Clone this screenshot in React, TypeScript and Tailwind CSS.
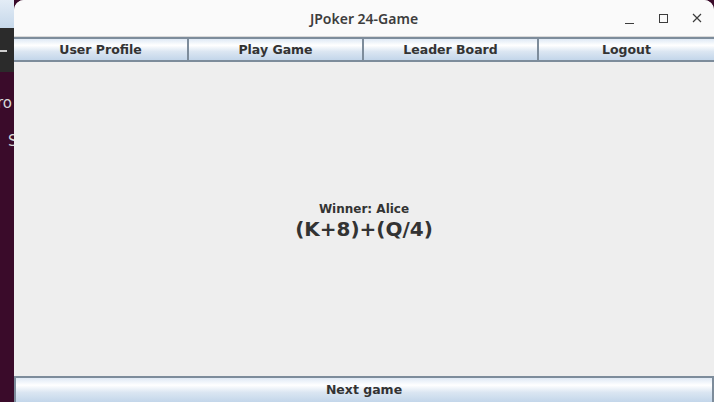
import React from 'react';

const font = { fontFamily: '"DejaVu Sans", "Noto Sans", sans-serif' };

function MetalButton({ label, className = '' }: { label: string; className?: string }) {
  return (
    <div
      className={`flex items-center justify-center pt-[1px] bg-[linear-gradient(to_bottom,#dfe9f5_0%,#ffffff_30%,#dbe6f2_60%,#c3d6ea_100%)] text-[12.5px] font-bold text-[#333333] ${className}`}
    >
      {label}
    </div>
  );
}

export default function App() {
  return (
    <div className="flex h-[402px] w-[714px] overflow-hidden bg-[#3a0b2a]" style={font}>
      {/* desktop strip behind the window */}
      <div className="flex w-[14px] shrink-0 flex-col">
        <div className="h-[28px] bg-[linear-gradient(to_bottom,#e3ecf6,#c6d8ea)]" />
        <div className="relative h-[44px] bg-[#2b2b2b]">
          <div className="absolute left-0 top-[22px] h-[2px] w-[7px] bg-[#cfcfcf]" />
        </div>
        <div className="relative flex-1 overflow-hidden text-[15px] text-[#d9d9d9]">
          <span className="absolute left-[-3px] top-[20px]">ro</span>
          <span className="absolute left-[8px] top-[58px]">S</span>
        </div>
      </div>

      {/* window */}
      <div className="flex flex-1 flex-col overflow-hidden rounded-t-[10px] bg-[#eeeeee]">
        {/* title bar */}
        <div className="relative flex h-[37px] shrink-0 items-center justify-center bg-[#fafafa] border-b border-[#d9d9d9]">
          <span className="text-[14px] font-semibold text-[#3d3d3d]" style={{ fontFamily: '"Noto Sans", "DejaVu Sans", sans-serif' }}>
            JPoker 24-Game
          </span>
          <div className="absolute right-0 top-0 flex h-full items-center">
            <div className="flex w-[34px] justify-center">
              <div className="mt-[10px] h-[1px] w-[9px] bg-[#3c3c3c]" />
            </div>
            <div className="flex w-[34px] justify-center">
              <div className="h-[9px] w-[9px] border border-[#3c3c3c]" />
            </div>
            <div className="flex w-[34px] justify-center">
              <svg width="10" height="10" viewBox="0 0 10 10">
                <path d="M1 1 L9 9 M9 1 L1 9" stroke="#3c3c3c" strokeWidth="1.2" />
              </svg>
            </div>
          </div>
        </div>

        {/* menu buttons */}
        <div className="grid h-[25px] shrink-0 grid-cols-4 border-y-2 border-[#7d8c9b]">
          <MetalButton label="User Profile" className="border-r-2 border-[#7d8c9b]" />
          <MetalButton label="Play Game" className="border-r-2 border-[#7d8c9b]" />
          <MetalButton label="Leader Board" className="border-r-2 border-[#7d8c9b]" />
          <MetalButton label="Logout" />
        </div>

        {/* content */}
        <div className="flex flex-1 flex-col items-center justify-center text-[#333333]">
          <div className="mt-[4px] text-[12px] font-bold leading-[16px]">Winner: Alice</div>
          <div className="text-[20px] font-bold leading-[24px]">(K+8)+(Q/4)</div>
        </div>

        {/* next game */}
        <div className="h-[26px] shrink-0 border-2 border-b-0 border-[#7d8c9b]">
          <MetalButton label="Next game" className="h-full" />
        </div>
      </div>
    </div>
  );
}
